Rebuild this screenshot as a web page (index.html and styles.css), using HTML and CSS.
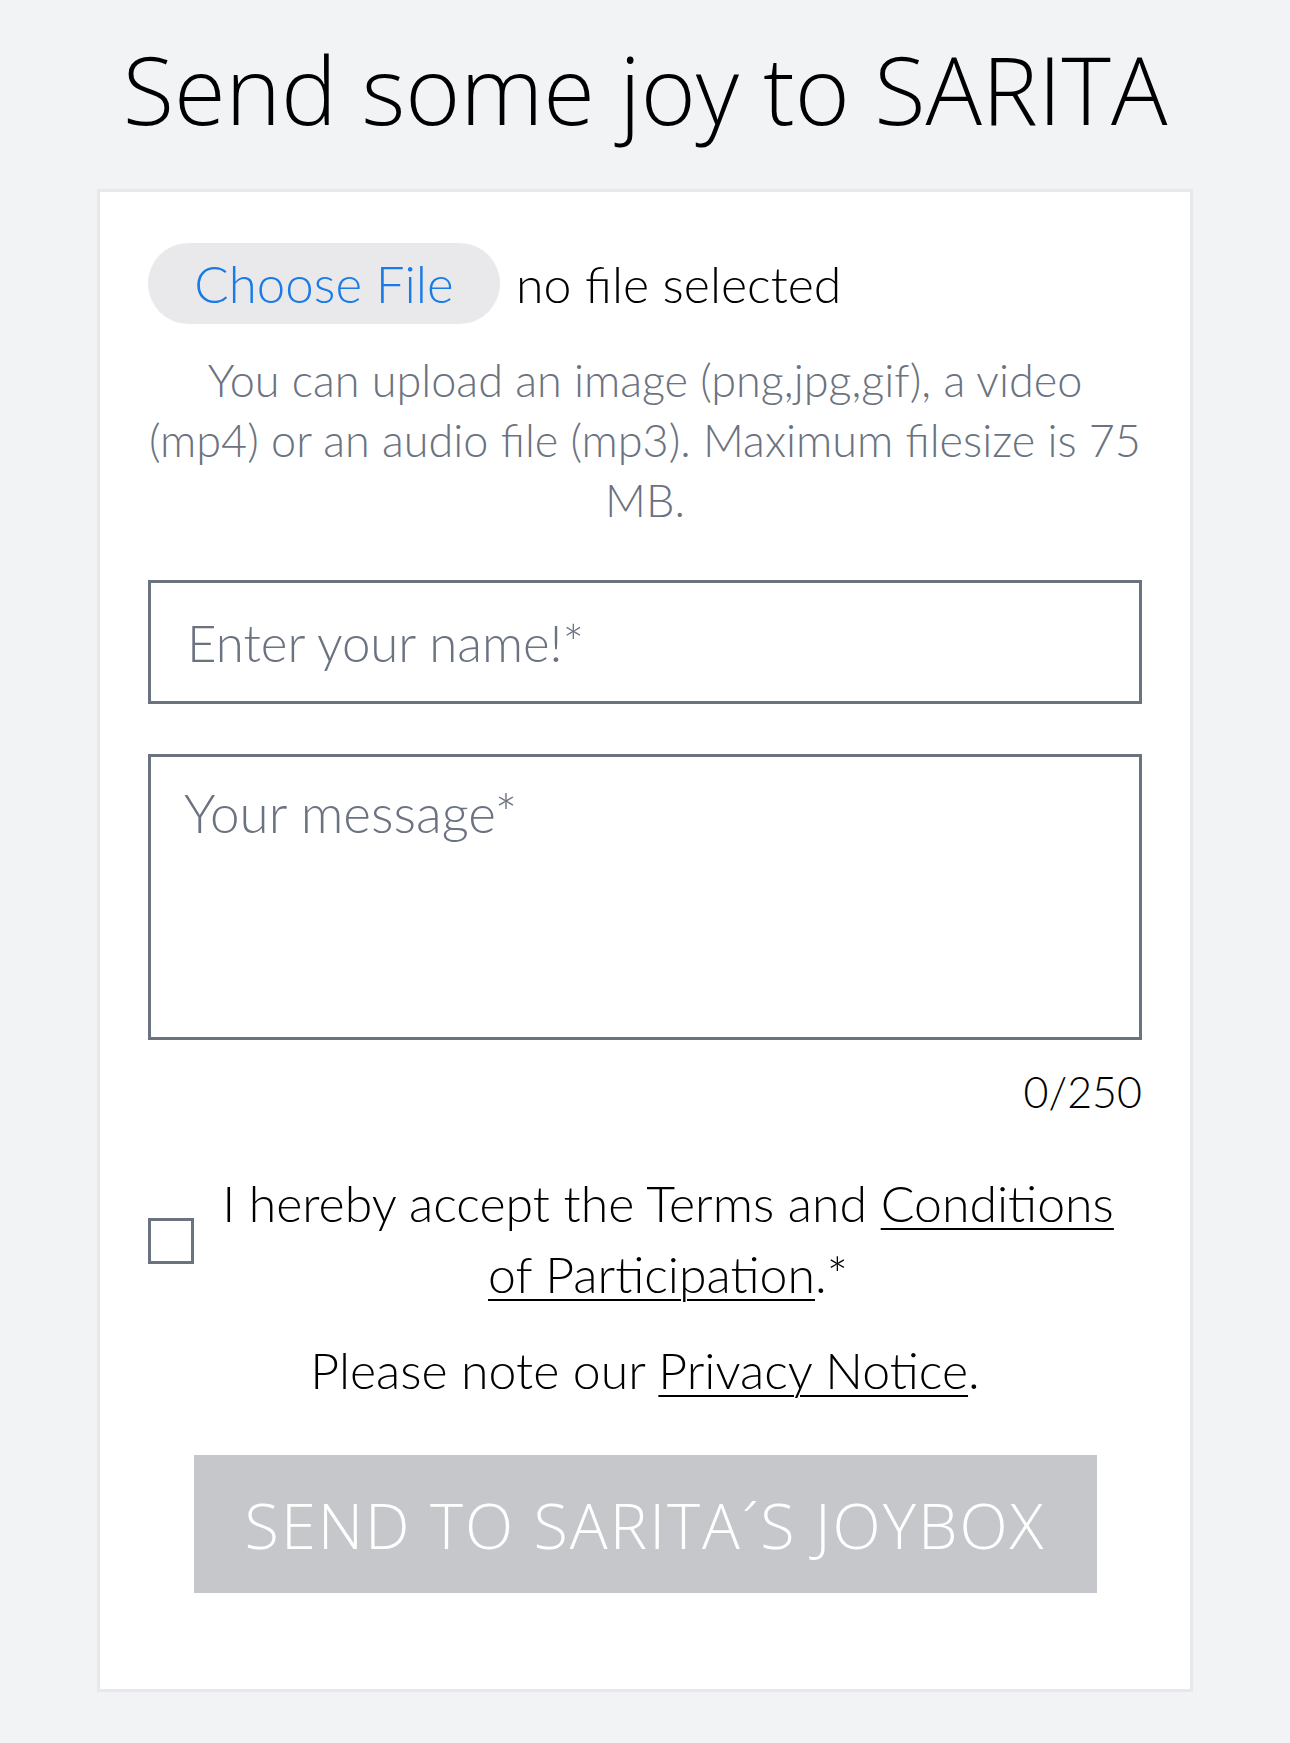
FILE: index.html
```html
<!DOCTYPE html>
<html lang="en">
<head>
<meta charset="utf-8">
<title>Send some joy to SARITA</title>
<link rel="stylesheet" href="styles.css">
</head>
<body>
<main class="page">
  <h1 class="title">Send some joy to SARITA</h1>
  <form class="card">
    <div class="file-row">
      <span class="file-btn">Choose File</span>
      <span class="file-name">no file selected</span>
    </div>
    <p class="hint">You can upload an image (png,jpg,gif), a video (mp4) or an audio file (mp3). Maximum filesize is 75 MB.</p>
    <input class="field name-field" type="text" placeholder="Enter your name!*">
    <textarea class="field msg-field" placeholder="Your message*"></textarea>
    <div class="counter">0/250</div>
    <label class="terms">
      <input class="check" type="checkbox">
      <span class="terms-text"><span class="line">I hereby accept the Terms and <a href="#">Conditions</a></span> <span class="line"><a href="#">of Participation</a>.*</span></span>
    </label>
    <p class="privacy">Please note our <a href="#">Privacy Notice</a>.</p>
    <button class="submit" type="button" disabled>SEND TO SARITA´S JOYBOX</button>
  </form>
</main>
</body>
</html>
```
FILE: styles.css
```css
* { box-sizing: border-box; }
html, body { margin: 0; padding: 0; }
body {
  background: #f2f3f5;
  font-family: "Lato", "Open Sans", sans-serif;
  font-weight: 300;
  color: #000;
}
.page {
  display: flex;
  flex-direction: column;
  align-items: center;
  padding-bottom: 53px;
}
.title {
  font-family: "Open Sans", sans-serif;
  font-weight: 300;
  font-size: 94px;
  line-height: 128px;
  margin: 25px 0 36px;
  letter-spacing: 0;
  color: #000;
}
.card {
  width: 1096px;
  background: #fff;
  border: 3px solid #e7e8eb;
  padding: 51px 48px 96px;
  display: flex;
  flex-direction: column;
}
.file-row {
  display: flex;
  align-items: center;
  gap: 16px;
}
.file-btn {
  display: inline-flex;
  align-items: center;
  justify-content: center;
  width: 352px;
  height: 81px;
  border-radius: 41px;
  background: #e9e9eb;
  color: #1b7be6;
  font-size: 51px;
  font-weight: 300;
}
.file-name {
  font-size: 50px;
  font-weight: 300;
}
.hint {
  margin: 26px 0 0;
  text-align: center;
  color: #6b7280;
  font-size: 45px;
  line-height: 60px;
}
.field {
  display: block;
  width: 100%;
  border: 3px solid #6b7280;
  border-radius: 0;
  background: #fff;
  font-family: inherit;
  font-weight: 300;
  font-size: 51px;
  color: #000;
  outline: none;
  margin: 0;
}
.field::placeholder { color: #6b7280; opacity: 1; }
.name-field {
  margin-top: 50px;
  height: 124px;
  padding: 0 36px;
}
.msg-field {
  margin-top: 50px;
  height: 286px;
  padding: 26px 33px;
  resize: none;
  line-height: 60px;
  font-size: 53px;
}
.counter {
  text-align: right;
  font-size: 43px;
  line-height: 60px;
  margin-top: 22px;
}
.terms {
  display: flex;
  align-items: center;
  margin-top: 46px;
}
.check {
  appearance: none;
  -webkit-appearance: none;
  width: 46px;
  height: 46px;
  margin: 4px 0 0;
  border: 3px solid #6b7280;
  border-radius: 0;
  background: #fff;
  flex: none;
}
.terms-text {
  flex: 1;
  text-align: center;
  font-size: 50px;
  line-height: 71px;
}
.terms-text .line { display: block; }
.terms-text a, .privacy a { color: #000; text-decoration: underline; text-underline-offset: 6px; text-decoration-thickness: 2px; }
.privacy {
  margin: 25px 0 0;
  text-align: center;
  font-size: 50px;
  line-height: 71px;
}
.submit {
  align-self: center;
  width: 903px;
  height: 138px;
  margin-top: 49px;
  border: none;
  background: #c6c7cb;
  color: #fff;
  font-family: "Open Sans", sans-serif;
  font-weight: 300;
  font-size: 63px;
  letter-spacing: 2px;
}
```
